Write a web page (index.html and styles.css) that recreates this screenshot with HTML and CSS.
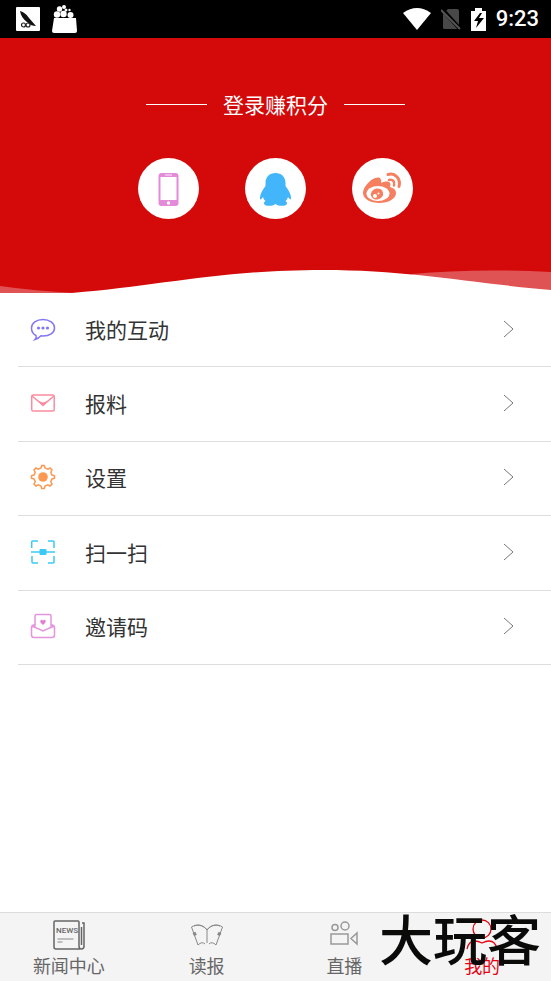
FILE: index.html
```html
<!DOCTYPE html>
<html lang="zh-CN">
<head>
<meta charset="utf-8">
<meta name="viewport" content="width=device-width, initial-scale=1">
<title>我的</title>
<link rel="stylesheet" href="styles.css">
</head>
<body>
<div class="app">
  <div class="status">
    <div class="status-group">
      <svg width="24" height="24" viewBox="0 0 24 24"><rect width="24" height="24" rx="1" fill="#fff"/><path d="M4 4c4 1 6 3 9 7l7 8c-3 0-6-1-9-4-4-3-6-6-7-11z" fill="#111"/><g fill="none" stroke="#222" stroke-width="1.2"><circle cx="7.500" cy="18" r="2"/><circle cx="12" cy="18" r="2"/></g></svg>
      <svg width="26" height="28" viewBox="0 0 26 28"><path d="M2 13h22l1 13q0 2-2 2H2q-2 0-2-2z" fill="#fff"/><g fill="#fff"><circle cx="5" cy="9.500" r="3.200"/><circle cx="11.500" cy="9" r="3.200"/><circle cx="18.500" cy="10" r="3"/><circle cx="7.500" cy="4" r="2.700"/><circle cx="12" cy="2" r="2"/><circle cx="14" cy="5" r="1.500"/><circle cx="17.500" cy="5" r="1.200"/></g></svg>
    </div>
    <div class="status-group status-right">
      <svg width="28" height="22" viewBox="0 0 28 22"><path d="M0 5Q14-5 28 5L14 22z" fill="#fff"/></svg>
      <svg width="20" height="22" viewBox="0 0 20 22"><path d="M7 1h9q2 0 2 2v17q0 1-2 1H4q-2 0-2-1V6z" fill="#484848"/><path d="M1 1l18 20" stroke="#000" stroke-width="4"/><path d="M0 2l19 19" stroke="#555" stroke-width="2"/></svg>
      <svg width="15" height="23" viewBox="0 0 15 23"><path d="M4 0h7v3h4v20H0V3h4z" fill="#fff"/><path d="M9 5l-6 8h4l-2 7 8-10H8l3-5z" fill="#000"/></svg>
      <time class="clock">9:23</time>
    </div>
  </div>

  <header class="hero">
    <h1 class="hero-title">登录赚积分</h1>
    <div class="logins">
      <button class="login" aria-label="手机登录"><svg width="61" height="61" viewBox="0 0 61 61"><rect x="20.500" y="15" width="20" height="33" rx="3" fill="#e38bd9"/><path d="M22.500 19h16v23h-16z" fill="#fff"/><path d="M27 17h7" stroke="#f5c8ef" stroke-width="1.500"/><circle cx="30.500" cy="45" r="1.700" fill="#fff"/></svg></button>
      <button class="login" aria-label="QQ登录"><svg width="61" height="61" viewBox="0 0 61 61"><path d="M30.500 15c-6 0-10 4-10 10v3c-3 4-5.500 8-5.500 12 0 2 1 2 3-1 .5 2 1.500 3 2.500 4-2 1-2 3-.5 4 3 1.500 8 1 10.500-1 2.500 2 7.500 2.500 10.500 1 1.500-1 1.500-3-.5-4 1-1 2-2 2.500-4 2 3 3 3 3 1 0-4-2.500-8-5.500-12v-3c0-6-4-10-10-10z" fill="#42b5fb"/></svg></button>
      <button class="login" aria-label="微博登录"><svg width="61" height="61" viewBox="0 0 61 61"><path d="M23 20c4-1.500 7 0 6 5 4-2 8-2 9 0 1 1 0 3 0 4 4 1 6 3 6 6 0 6-8 10-16.500 10-9 0-16.500-4-16.500-10S18 22 23 20z" fill="#f57f5f"/><ellipse cx="26" cy="35.500" rx="11.500" ry="7.500" fill="#fff"/><ellipse cx="25" cy="36" rx="6.200" ry="5.500" transform="rotate(-15 25 36)" fill="#f57f5f"/><circle cx="23" cy="38" r="2" fill="#fff"/><circle cx="26.500" cy="35.500" r="1" fill="#fff"/><path d="M36 16.500c7-2 13 4 11 12" fill="none" stroke="#f57f5f" stroke-width="3" stroke-linecap="round"/><path d="M37 22c4-1 6 1.500 5 5.500" fill="none" stroke="#f57f5f" stroke-width="2.500" stroke-linecap="round"/></svg></button>
    </div>
    <svg class="wave" viewBox="0 0 551 23" preserveAspectRatio="none"><path d="M0 16Q35 21 75 23H0zM412 4Q475-2 551 2V23H412z" fill="#e05355"/><path d="M72 23C160 16 220 0 323 0C410 0 470 13 551 20V23z" fill="#fff"/></svg>
  </header>

  <main class="menu">
    <a class="row" href="#"><svg class="icon" viewBox="0 0 26 26" stroke="#8377f5"><path d="M6 19.500C3 18 1.500 15 1.500 12c0-5 5-8.500 11.500-8.500S24.500 7 24.500 12 19.500 20 13 20l-2-.2C9 22 7 23 5 23.500c1-1 1.500-2.500 1-4z"/><g fill="#8377f5" stroke="none"><circle cx="8.500" cy="12" r="1.600"/><circle cx="13" cy="12" r="1.600"/><circle cx="17.500" cy="12" r="1.600"/></g></svg><span class="label">我的互动</span><svg class="arrow" viewBox="0 0 12 20"><path d="M1 2l9 8-9 8"/></svg></a>
    <a class="row" href="#"><svg class="icon" viewBox="0 0 26 26" stroke="#fc8ca0"><rect x="1.700" y="5" width="22.500" height="16" rx="1.500"/><path d="M2 6l11 9 11-9"/><path d="M7 10.500l6 2 6-2-6 6z" fill="#fc8ca0" stroke="none"/></svg><span class="label">报料</span><svg class="arrow" viewBox="0 0 12 20"><path d="M1 2l9 8-9 8"/></svg></a>
    <a class="row" href="#"><svg class="icon" viewBox="0 0 26 26" stroke="#fc9850"><path d="M11 4l.7-2.500h2.600L15 4l2.800 1.200L20 4l2 2-1.200 2.200L22 11l2.500.7v2.600L22 15l-1.200 2.800L22 20l-2 2-2.200-1.200L15 22l-.7 2.500h-2.600L11 22l-2.800-1.200L6 22l-2-2 1.200-2.200L4 15l-2.500-.7v-2.600L4 11l1.200-2.800L4 6l2-2 2.200 1.200z"/><circle cx="13" cy="13" r="4.800" fill="#fc9850" stroke="none"/></svg><span class="label">设置</span><svg class="arrow" viewBox="0 0 12 20"><path d="M1 2l9 8-9 8"/></svg></a>
    <a class="row" href="#"><svg class="icon" viewBox="0 0 26 26" stroke="#3bcaf3"><path d="M1.700 9V3q0-1 1-1H8M18 2h5q1 0 1 1v6M24 17v6q0 1-1 1h-5M8 24H3q-1 0-1-1v-6M1 13h24"/><rect x="9.500" y="10" width="7" height="6" rx="1" fill="#3bcaf3" stroke="none"/></svg><span class="label">扫一扫</span><svg class="arrow" viewBox="0 0 12 20"><path d="M1 2l9 8-9 8"/></svg></a>
    <a class="row" href="#"><svg class="icon" viewBox="0 0 26 26" stroke="#e595dd"><path d="M5 14V3q0-1.500 1.500-1.500h13Q21 1.500 21 3v11M5 11.500l-2.500 1q-1 .5-1 2V22q0 2.500 2.500 2.500h18q2.500 0 2.500-2.500v-7.500q0-1.500-1-2l-2.500-1M2 13l11 5 11-5"/><path d="M13 12L10.500 9.500c-1-3 1.700-3.500 2.500-1.700.8-1.800 3.500-1.300 2.500 1.700z" fill="#df80d5" stroke="none"/></svg><span class="label">邀请码</span><svg class="arrow" viewBox="0 0 12 20"><path d="M1 2l9 8-9 8"/></svg></a>
  </main>

  <nav class="tabs">
    <a class="tab" href="#"><svg class="tab-icon" viewBox="0 0 34 32" stroke="#666"><path d="M28 30H4q-2 0-2-2V3q0-1 1-1h23q1 0 1 1v24q0 3 2.500 3T32 27V4h-2M29.500 8v18" stroke-width="1.500"/><path d="M5.500 20h16M5.500 23h5" stroke="#888"/><text class="news" x="4" y="14">NEWS</text></svg><span>新闻中心</span></a>
    <a class="tab" href="#"><svg class="tab-icon" viewBox="0 0 34 32" stroke="#888"><path d="M17 11v13M17 11C13 5 6 5 1.500 8M17 11C21 5 28 5 32.500 8M4 7c5-2 10 0 13 4 3-4 8-6 13-4M1.500 8L8 26q4-4 7-1M32.500 8L26 26q-4-4-7-1"/><path d="M4 13.500l1.500 3M30 13.500l-1.500 3" stroke-width="3"/></svg><span>读报</span></a>
    <a class="tab" href="#"><svg class="tab-icon" viewBox="0 0 34 32" stroke="#999"><circle cx="8" cy="8.500" r="3" stroke-width="1.500"/><circle cx="18" cy="7" r="4" stroke-width="1.500"/><path d="M4 15h17v10H4zM30 14v11l-6-5.500z" stroke-width="1.500"/></svg><span>直播</span></a>
    <a class="tab active" href="#"><svg class="tab-icon" viewBox="0 0 34 32" stroke="#e60012"><circle cx="17" cy="10" r="9" stroke-width="1.300"/><path d="M2 30C3 25 6 22 10 22q3 0 7 2 4-2 7-2c4 0 7 3 8 8" stroke-width="1.300"/></svg><span>我的</span></a>
    <div class="stamp">大玩客</div>
  </nav>
</div>
</body>
</html>
```
FILE: styles.css
```css
* {
  box-sizing: border-box;
}

body {
  margin: 0;
  background: #fff;
  color: #333;
  font-family: "Noto Sans CJK SC", sans-serif;
}

svg {
  display: block;
  flex: none;
}

a {
  color: inherit;
  text-decoration: none;
}

.app {
  display: flex;
  flex-direction: column;
  min-height: 100vh;
}

.status {
  display: flex;
  align-items: center;
  justify-content: space-between;
  height: 38px;
  padding: 0 12px 0 16px;
  background: #000;
  color: #fff;
}

.status-group {
  display: flex;
  align-items: center;
  gap: 12px;
}

.status-right {
  gap: 10px;
}

.clock {
  font: 500 22px/24px Roboto, sans-serif;
}

.hero {
  display: flex;
  flex-direction: column;
  padding-top: 51px;
  background: #d40a0a;
}

.hero-title {
  display: flex;
  align-items: center;
  justify-content: center;
  gap: 16px;
  margin: 0;
  color: #fff;
  font-size: 21px;
  font-weight: 400;
  line-height: 30px;
}

.hero-title::before,
.hero-title::after {
  content: "";
  width: 61px;
  height: 1px;
  background: #fff;
}

.logins {
  display: flex;
  justify-content: center;
  gap: 46px;
  margin: 39px 0 51px;
}

.login {
  width: 61px;
  height: 61px;
  padding: 0;
  border: 0;
  border-radius: 50%;
  background: #fff;
}

.wave {
  width: 100%;
  height: 23px;
}

.menu {
  display: grid;
  grid-auto-rows: 1fr;
  min-height: 372px;
  margin-left: 18px;
}

.row {
  display: flex;
  align-items: center;
  padding: 0 36px 2px 12px;
  border-bottom: 1px solid #ddd;
}

.icon {
  width: 26px;
  height: 26px;
  fill: none;
  stroke-width: 1.5;
}

.label {
  flex: 1;
  margin-left: 29px;
  font-size: 21px;
  line-height: 30px;
}

.arrow {
  width: 12px;
  height: 20px;
  fill: none;
  stroke: #777;
}

.tabs {
  position: relative;
  display: grid;
  grid-template-columns: repeat(4, 1fr);
  margin-top: auto;
  border-top: 1px solid #ddd;
  background: #f4f4f4;
}

.tab {
  display: flex;
  flex-direction: column;
  align-items: center;
  padding: 6px 0 2px;
  color: #666;
  font-size: 18px;
  line-height: 28px;
}

.tab-icon {
  width: 34px;
  height: 32px;
  fill: none;
}

.news {
  fill: #666;
  stroke: none;
  font: 500 8px/8px Roboto, sans-serif;
}

.active {
  color: #e60012;
}

.stamp {
  position: absolute;
  right: 10px;
  bottom: 8px;
  color: #0a0a08;
  font-size: 54px;
  font-weight: 500;
  line-height: 70px;
  pointer-events: none;
}
```
